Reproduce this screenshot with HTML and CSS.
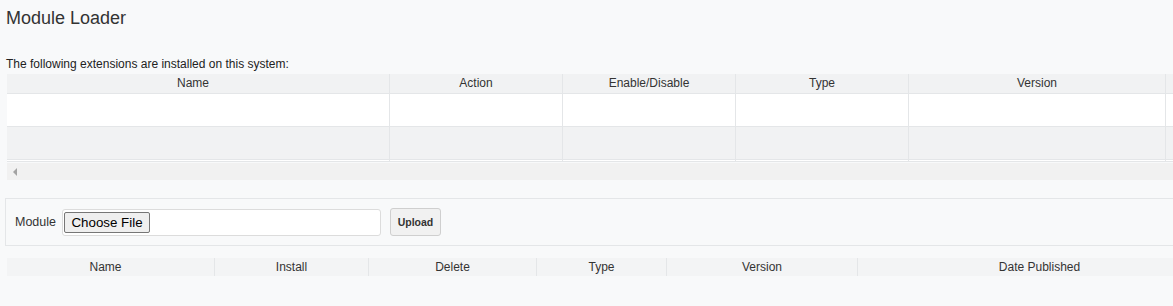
FILE: index.html
```html
<!DOCTYPE html>
<html lang="en">
<head>
    <meta charset="UTF-8">
    <meta name="viewport" content="width=device-width, initial-scale=1.0">
    <title>Module Loader</title>
    <link rel="stylesheet" href="styles.css">
</head>
<body>
    <div class="page">
        <h1 class="title">Module Loader</h1>
        <p class="intro">The following extensions are installed on this system:</p>

        <div class="grid-wrap">
            <table class="grid installed">
                <colgroup>
                    <col style="width: 383px">
                    <col style="width: 173px">
                    <col style="width: 173px">
                    <col style="width: 173px">
                    <col style="width: 257px">
                    <col style="width: 200px">
                </colgroup>
                <thead>
                    <tr>
                        <th>Name</th>
                        <th>Action</th>
                        <th>Enable/Disable</th>
                        <th>Type</th>
                        <th>Version</th>
                        <th></th>
                    </tr>
                </thead>
                <tbody>
                    <tr><td></td><td></td><td></td><td></td><td></td><td></td></tr>
                    <tr><td></td><td></td><td></td><td></td><td></td><td></td></tr>
                </tbody>
                <tfoot>
                    <tr><td></td><td></td><td></td><td></td><td></td><td></td></tr>
                </tfoot>
            </table>
        </div>
        <div class="hscroll"><span class="arrow-left"></span></div>

        <form class="upload-box" onsubmit="return false">
            <label class="upload-label" for="module-file">Module</label>
            <input id="module-file" class="file-input" type="file">
            <button class="upload-btn" type="submit">Upload</button>
        </form>

        <table class="grid available">
            <colgroup>
                <col style="width: 208px">
                <col style="width: 154px">
                <col style="width: 168px">
                <col style="width: 130px">
                <col style="width: 191px">
                <col style="width: 364px">
            </colgroup>
            <thead>
                <tr>
                    <th>Name</th>
                    <th>Install</th>
                    <th>Delete</th>
                    <th>Type</th>
                    <th>Version</th>
                    <th>Date Published</th>
                </tr>
            </thead>
        </table>
    </div>
</body>
</html>
```
FILE: styles.css
```css
body {
    margin: 0;
    background: #f8f9fa;
    color: #333;
    font-family: "Liberation Sans", Arial, sans-serif;
    overflow: hidden;
}
.page {
    width: 1400px;
}
.title {
    margin: 0;
    padding: 8px 0 0 6px;
    font-size: 18px;
    line-height: 21px;
    font-weight: normal;
    color: #333;
}
.intro {
    margin: 28px 0 0 6px;
    font-size: 12px;
    line-height: 14px;
    color: #222;
}
.grid-wrap {
    margin: 3px 0 0 7px;
    width: 1166px;
    overflow: hidden;
}
.grid {
    border-collapse: separate;
    border-spacing: 0;
    table-layout: fixed;
    font-size: 12px;
}
.installed {
    width: 1359px;
}
.grid th {
    box-sizing: border-box;
    padding: 2px 0 3px;
    line-height: 14px;
    font-weight: normal;
    text-align: center;
    color: #333;
    background: #f1f2f3;
    border-right: 1px solid #e4e6e8;
    border-bottom: 1px solid #e4e6e8;
}
.grid th:first-child {
    padding-right: 10px;
}
.grid td {
    height: 32px;
    padding: 0;
    background: #fff;
    border-right: 1px solid #e4e6e8;
    border-bottom: 1px solid #e4e6e8;
}
.grid tbody tr:nth-child(2) td {
    background: #f1f2f3;
}
.grid tfoot td {
    height: 1px;
    background: #fff;
}
.hscroll {
    display: flex;
    align-items: center;
    height: 17px;
    margin: 1px 0 0 7px;
    width: 1166px;
    padding-left: 6px;
    box-sizing: border-box;
    background: #f1f1f1;
}
.arrow-left {
    width: 0;
    height: 0;
    border-top: 4px solid transparent;
    border-bottom: 4px solid transparent;
    border-right: 4px solid #a3a3a3;
}
.upload-box {
    display: flex;
    align-items: center;
    margin: 18px 0 0 5px;
    padding: 9px 0 9px 9px;
    border: 1px solid #e4e6e8;
    height: 28px;
}
.upload-label {
    font-size: 12.5px;
    color: #333;
    margin-right: 6px;
}
.file-input {
    box-sizing: border-box;
    width: 319px;
    height: 27px;
    padding: 2px 1px;
    background: #fff;
    border: 1px solid #dcdcdc;
    border-radius: 3px;
    color: transparent;
    font-family: "Liberation Sans", Arial, sans-serif;
    font-size: 13px;
}
.file-input::file-selector-button {
    box-sizing: border-box;
    height: 21px;
    width: 86px;
    margin: 0;
    padding: 0;
    background: #efefef;
    border: 1px solid #767676;
    border-radius: 2px;
    color: #000;
    font-family: "Liberation Sans", Arial, sans-serif;
    font-size: 13.33px;
}
.upload-btn {
    box-sizing: border-box;
    margin-left: 9px;
    width: 51px;
    height: 28px;
    padding: 0;
    background: #f1f1f1;
    border: 1px solid #cfcfcf;
    border-radius: 3px;
    color: #333;
    font-family: "Liberation Sans", Arial, sans-serif;
    font-size: 10.5px;
    font-weight: bold;
}
.available {
    margin: 12px 0 0 7px;
    width: 1215px;
}
.available th {
    background: #f3f4f5;
    border-bottom: none;
    padding: 2px 0 2px;
}
.available th:first-child {
    padding-right: 10px;
}
```
